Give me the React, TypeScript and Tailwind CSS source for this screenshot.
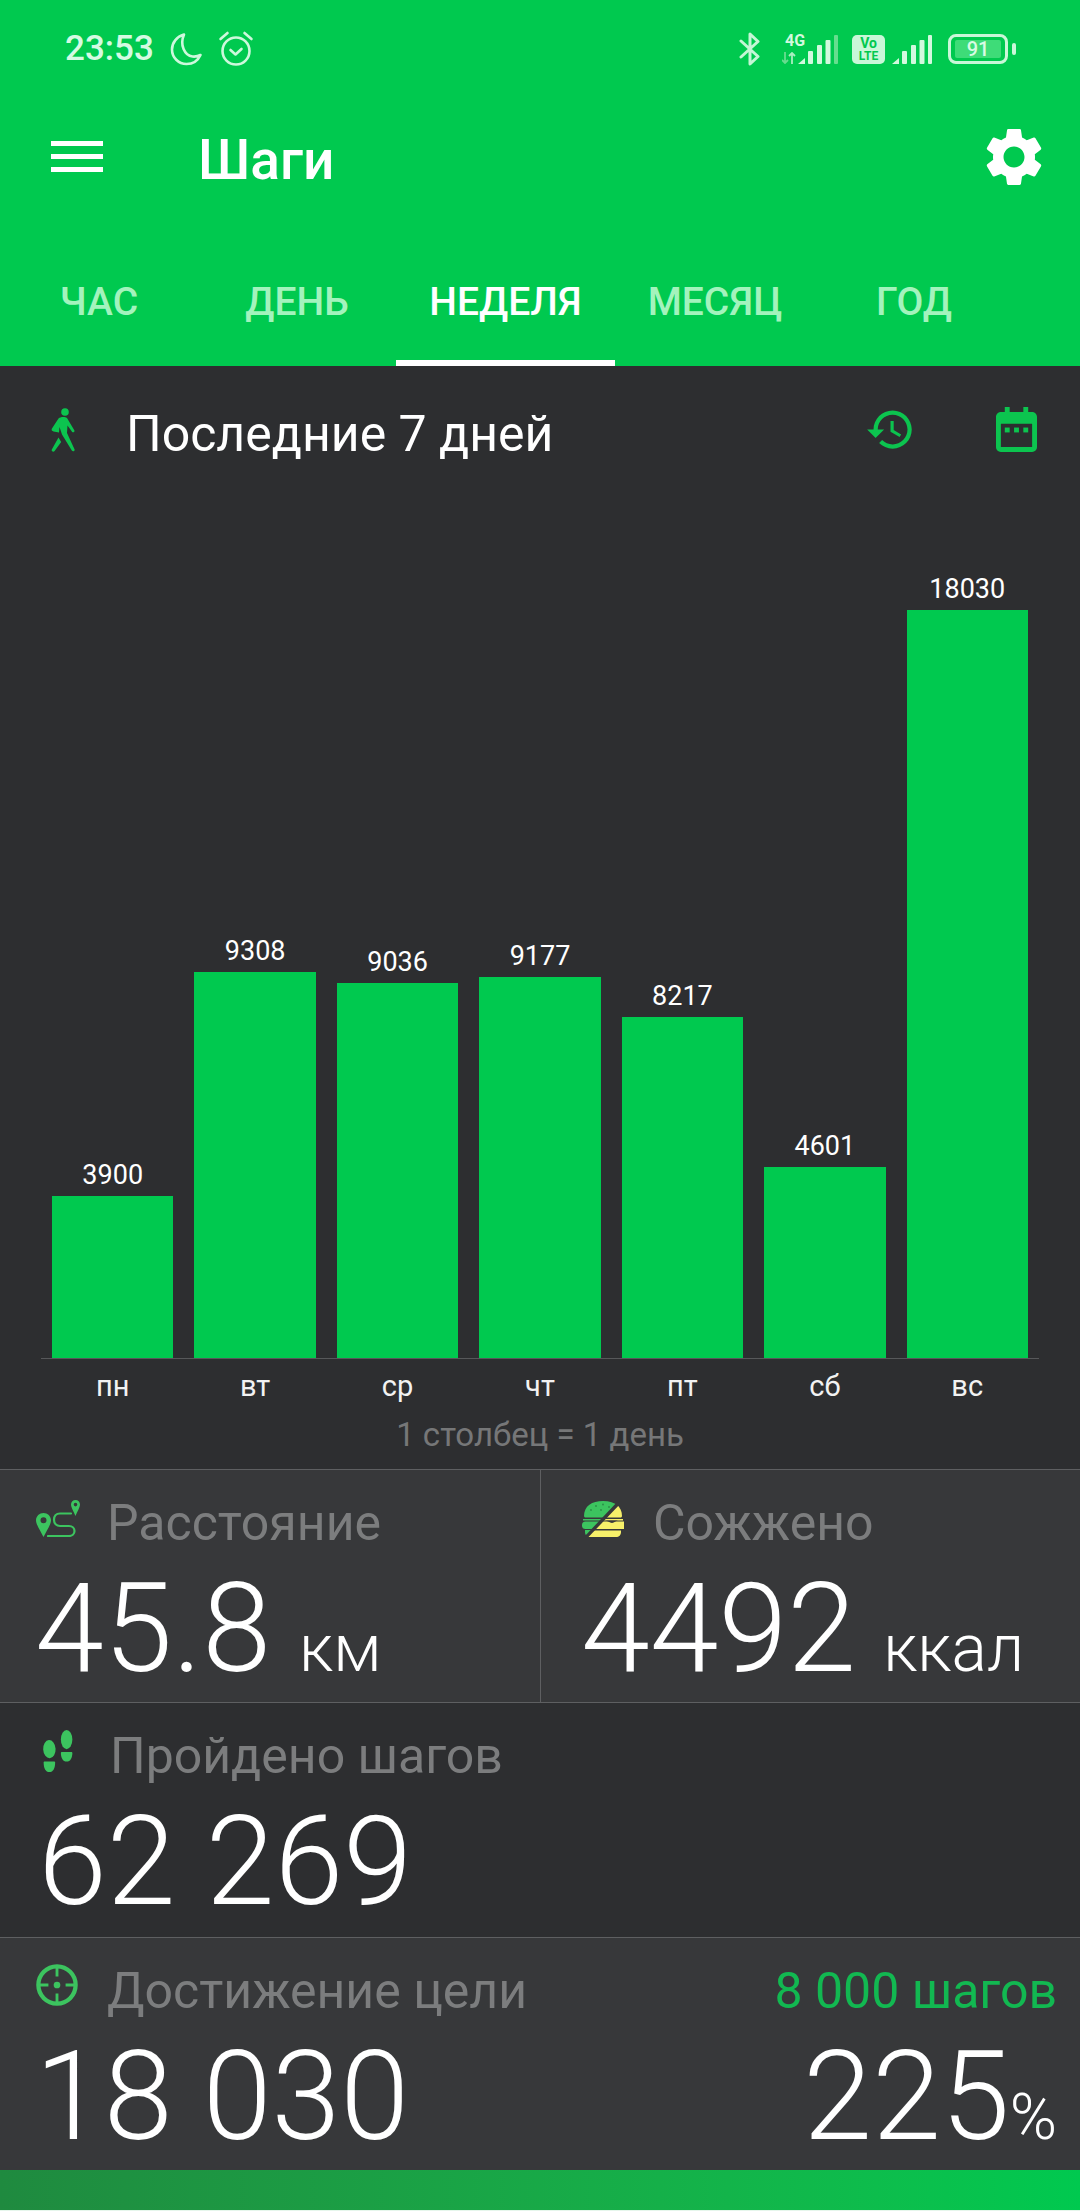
import React from "react";

const days = [
  { d: "пн", v: 3900 },
  { d: "вт", v: 9308 },
  { d: "ср", v: 9036 },
  { d: "чт", v: 9177 },
  { d: "пт", v: 8217 },
  { d: "сб", v: 4601 },
  { d: "вс", v: 18030 },
];

function Moon() {
  return (
    <svg width="36" height="36" viewBox="0 0 36 36" fill="none" stroke="#cdf8dc" strokeWidth="2.6" className="block">
      <path d="M15 3.500C8 5.500 3 11.500 3 18.500c0 8 6.500 14.500 14.500 14.500 6.500 0 11.500-3.500 14-9-2.500 1.300-5 1.800-8 1.500C15.500 24.500 10.500 14 15 3.500z" strokeLinejoin="round" />
    </svg>
  );
}
function Alarm() {
  return (
    <svg width="36" height="38" viewBox="0 0 36 38" fill="none" stroke="#cdf8dc" strokeWidth="2.6" strokeLinecap="round" strokeLinejoin="round" className="block">
      <circle cx="18" cy="21" r="13.500" />
      <path d="M12.500 20l5 4.500 6-5.500" />
      <path d="M2.500 9l7-6M33.500 9l-7-6" />
    </svg>
  );
}
function Bt() {
  return (
    <svg width="21" height="34" viewBox="0 0 21 34" fill="none" stroke="#c4f6d5" strokeWidth="3" strokeLinejoin="round" strokeLinecap="round" className="block">
      <path d="M2 9l17 15.500-8 7.500V2l8 7.500L2 25" />
    </svg>
  );
}
function Bars({ last }: { last: string }) {
  return (
    <svg width="40" height="29" viewBox="0 0 40 29" fill="#d2f9de" className="block">
      <path d="M0 29L7 23V29z" />
      <rect x="10" y="16" width="5" height="13" rx="1" />
      <rect x="19" y="10" width="5" height="19" rx="1" />
      <rect x="27.500" y="5" width="5" height="24" rx="1" />
      <rect x="36" y="0" width="4" height="29" rx="1" fill={last} />
    </svg>
  );
}

function StatusIcons() {
  return (
    <div className="flex items-center">
      <Bt />
      <div className="relative ml-[22px] h-[29px] w-[56px]">
        <span className="absolute left-[3px] top-[-2px] text-[16px] font-bold leading-[16px] text-[#d2f9de]">4G</span>
        <svg className="absolute left-0 bottom-0" width="14" height="12" viewBox="0 0 14 12" fill="none" strokeWidth="1.800">
          <path d="M3 0v11M0 8l3 3 3-3" stroke="#68dc8f" />
          <path d="M10 12V1M7 4l3-3 3 3" stroke="#a9eebf" />
        </svg>
        <div className="absolute bottom-0 right-0">
          <Bars last="#66de8e" />
        </div>
      </div>
      <div className="ml-[14px] flex h-[29px] w-[33px] flex-col items-center justify-center rounded-[5px] bg-[#c9f7d8] text-[14px] font-bold leading-[13px] text-[#00c94f]">
        <span>Vo</span>
        <span className="text-[12px] leading-[12px]">LTE</span>
      </div>
      <div className="ml-[7px]">
        <Bars last="#d2f9de" />
      </div>
      <div className="ml-[16px] flex h-[30px] w-[60px] items-center rounded-[8px] border-[3px] border-[#c9f7d8] px-[4px]">
        <div className="flex h-[18px] w-full items-center justify-center rounded-[2px] bg-[#3edc78] text-[20px] font-medium leading-none text-[#d9fbe4]">91</div>
      </div>
      <div className="ml-[4px] h-[12px] w-[4px] rounded-[2px] bg-[#c9f7d8]" />
    </div>
  );
}

function Walk() {
  return (
    <svg width="24" height="44" viewBox="0 0 24 44" fill="#0cc44f" className="block">
      <circle cx="14" cy="4" r="3.800" />
      <path d="M7.500 10.500C9.500 8.500 14 8.500 16 10l7.300 12.300c.8 1.500-1.300 2.800-2.300 1.400L16.500 17.500l-.5 7.500 7.500 16.300c.7 1.700-1.700 2.800-2.700 1.300L11 26.500 8.500 19 8 24.500 2.500 23.500C.8 23.100.300 22 .8 20.700z" />
      <path d="M7.500 29.500l2.700 4.500L3.600 43c-1.100 1.500-3.500.3-2.800-1.400z" />
    </svg>
  );
}
function History() {
  return (
    <svg width="51" height="51" viewBox="0 0 24 24" fill="#0cc44f" className="block">
      <path d="M13 3c-4.970 0-9 4.030-9 9H1l3.890 3.890.07.14L9 12H6c0-3.870 3.130-7 7-7s7 3.130 7 7-3.130 7-7 7c-1.930 0-3.680-.79-4.940-2.060l-1.420 1.420C8.270 19.990 10.510 21 13 21c4.970 0 9-4.030 9-9s-4.030-9-9-9zm-1 5v5l4.280 2.540.72-1.210-3.500-2.080V8H12z" />
    </svg>
  );
}
function Calendar() {
  return (
    <svg width="41" height="45" viewBox="0 0 42 46" className="block">
      <path fill="#0cc44f" fillRule="evenodd" d="M9 0h5v5h14V0h5v5h4c2.800 0 5 2.200 5 5v31c0 2.800-2.200 5-5 5H5c-2.800 0-5-2.200-5-5V10c0-2.800 2.200-5 5-5h4zM5 17v24h32V17z" />
      <rect x="9" y="21" width="5" height="5" fill="#0cc44f" />
      <rect x="18.500" y="21" width="5" height="5" fill="#0cc44f" />
      <rect x="28" y="21" width="5" height="5" fill="#0cc44f" />
    </svg>
  );
}
function Gear() {
  return (
    <svg width="70" height="70" viewBox="0 0 24 24" fill="#fff" className="block">
      <path d="M19.140 12.940c.04-.3.06-.61.06-.94 0-.32-.02-.64-.07-.94l2.030-1.580c.18-.14.23-.41.12-.61l-1.920-3.320c-.12-.22-.37-.29-.59-.22l-2.390.96c-.5-.38-1.030-.7-1.620-.94L14.400 2.810c-.04-.24-.24-.41-.48-.41h-3.840c-.24 0-.43.17-.47.41L9.250 5.350C8.660 5.590 8.120 5.920 7.630 6.290L5.240 5.330c-.22-.08-.47 0-.59.22L2.740 8.870c-.12.21-.08.47.12.61l2.030 1.580C4.840 11.360 4.800 11.690 4.800 12s.02.64.07.94l-2.030 1.580c-.18.14-.23.41-.12.61l1.920 3.320c.12.22.37.29.59.22l2.390-.96c.5.38 1.030.7 1.620.94l.36 2.540c.05.24.24.41.48.41h3.840c.24 0 .44-.17.47-.41l.36-2.540c.59-.24 1.130-.56 1.620-.94l2.390.96c.22.08.47 0 .59-.22l1.920-3.320c.12-.22.07-.47-.12-.61L19.140 12.940zM12 15.600c-1.980 0-3.600-1.620-3.600-3.600s1.620-3.600 3.600-3.600 3.600 1.620 3.600 3.600-1.620 3.600-3.600 3.600z" />
    </svg>
  );
}

const ICON = "#3cc45f";
function RouteIcon() {
  return (
    <svg width="44" height="37" viewBox="0 0 44 37" fill="none" className="block">
      <path fill={ICON} fillRule="evenodd" d="M7.500 13c4.100 0 7.500 3.200 7.500 7.200 0 4.200-4.200 10.300-7.500 16.800C4.200 30.500 0 24.400 0 20.200 0 16.200 3.400 13 7.500 13zm0 4.200a3 3 0 100 6 3 3 0 000-6z" />
      <path fill={ICON} fillRule="evenodd" d="M39.500 0C42 0 44 2 44 4.500c0 2.700-2.500 6.800-4.500 11.500-2-4.700-4.500-8.800-4.500-11.500C35 2 37 0 39.500 0zm0 2.800a1.800 1.800 0 100 3.600 1.800 1.800 0 000-3.600z" />
      <path stroke={ICON} strokeWidth="2.200" strokeLinecap="round" d="M35 13.500H24c-4 0-6 2.800-6 6.300s2.500 6.200 6 6.200h9c3.400 0 5.500 2.200 5.500 5s-2.100 5-5.500 5H12" />
    </svg>
  );
}
function BurgerIcon() {
  return (
    <svg width="42" height="36" viewBox="0 0 42 36" className="block">
      <defs>
        <clipPath id="bgA"><path d="M-1 -1H37L2 36H-1z" /></clipPath>
        <clipPath id="bgB"><path d="M42 0V36H6.500L41 0z" /></clipPath>
      </defs>
      <g clipPath="url(#bgA)" fill="#3cc45f">
        <path d="M2 15C2 5 10 0 21 0s19 5 19 15c0 .8-.7 1.500-1.500 1.500h-35C2.700 16.500 2 15.800 2 15z" />
        <rect x="1" y="18" width="40" height="1.500" />
        <rect x="0" y="20.500" width="42" height="7.500" rx="3.500" />
        <path d="M3 29h36v2c0 3-2 5-5 5H8c-3 0-5-2-5-5z" />
      </g>
      <g fill="#2a8c46">
        <circle cx="14" cy="5" r="0.900" /><circle cx="21" cy="3.500" r="0.900" /><circle cx="27" cy="6" r="0.900" /><circle cx="9" cy="9" r="0.900" /><circle cx="19" cy="9" r="0.900" />
      </g>
      <g clipPath="url(#bgB)" fill="#f7f06a">
        <path d="M2 15C2 5 10 0 21 0s19 5 19 15c0 .8-.7 1.500-1.500 1.500h-35C2.700 16.500 2 15.800 2 15z" />
        <rect x="1" y="18" width="40" height="1.500" />
        <path d="M4 20.500H42V28H4z" />
        <path d="M3 29.500h36V31c0 3-2 5-5 5H8c-3 0-5-2-5-5z" />
      </g>
      <path d="M23 19.500c3 0 4.500 2.500 7 2.500s3.500-2.500 6-2.500z" fill="#38393b" />
    </svg>
  );
}
function FeetIcon() {
  return (
    <svg width="32" height="44" viewBox="0 0 32 46" fill={ICON} className="block">
      <ellipse cx="7" cy="20" rx="6.500" ry="9.500" transform="rotate(-3 7 20)" />
      <path d="M2 33h10c.5 0 1 .5 1 1 0 6-2 10-6 10s-6-4-6-10c0-.5.5-1 1-1z" />
      <ellipse cx="25" cy="10" rx="6" ry="10" />
      <path d="M20 23h10c.5 0 1 .5 1 1 0 5-2 9-6 9s-6-4-6-9c0-.5.5-1 1-1z" />
    </svg>
  );
}
function TargetIcon() {
  return (
    <svg width="44" height="42" viewBox="0 0 44 44" fill="none" stroke={ICON} strokeWidth="4.500" className="block">
      <circle cx="22" cy="22" r="19.500" />
      <path d="M22 3v10M22 31v10M3 22h10M31 22h10" strokeWidth="3" />
      <circle cx="22" cy="22" r="3.500" fill={ICON} stroke="none" />
    </svg>
  );
}

const num = "font-light text-white";

export default function App() {
  return (
    <div className="flex h-[2211px] w-[1080px] flex-col overflow-hidden bg-[#2d2e30] font-['Roboto',sans-serif]">
      <header className="h-[366px] shrink-0 bg-[#00c94f]">
        <div className="flex h-[98px] items-center pl-[65px] pr-[64px]">
          <span className="text-[35px] font-medium text-[#d5fae2]">23:53</span>
          <span className="ml-[15px]"><Moon /></span>
          <span className="ml-[13px]"><Alarm /></span>
          <div className="flex-1" />
          <StatusIcons />
        </div>
        <div className="flex h-[124px] items-center pl-[51px] pr-[31px]">
          <div className="mb-[8px] flex w-[52px] flex-col gap-[8px]">
            <div className="h-[5px] bg-white" />
            <div className="h-[5px] bg-white" />
            <div className="h-[5px] bg-white" />
          </div>
          <h1 className="ml-[95px] text-[55px] font-medium text-white">Шаги</h1>
          <div className="flex-1" />
          <div className="mb-[6px]"><Gear /></div>
        </div>
        <div className="flex h-[144px]">
          {[
            { t: "ЧАС", w: "w-[198px]" },
            { t: "ДЕНЬ", w: "w-[198px]" },
            { t: "НЕДЕЛЯ", w: "w-[219px]", a: true },
            { t: "МЕСЯЦ", w: "w-[200px]" },
            { t: "ГОД", w: "w-[198px]" },
          ].map((x) => (
            <div
              key={x.t}
              className={`${x.w} flex items-center justify-center border-b-[6px] pt-[22px] text-[39px] font-medium ${x.a ? "border-white text-white" : "border-transparent text-[#a3f3bd]"}`}
            >
              {x.t}
            </div>
          ))}
        </div>
      </header>

      <section className="flex h-[137px] shrink-0 items-center pl-[51px] pr-[43px]">
        <div className="mb-[9px]"><Walk /></div>
        <span className="ml-[51px] text-[50px] text-white">Последние 7 дней</span>
        <div className="flex-1" />
        <div className="mb-[10px] flex items-center">
          <History />
          <span className="ml-[80px]"><Calendar /></span>
        </div>
      </section>

      <section className="mx-[41px] flex h-[856px] shrink-0 items-end gap-[21px] border-b border-[#57585a] px-[11px]">
        {days.map((x) => (
          <div key={x.d} className="flex w-[121.500px] flex-col items-center">
            <span className="mb-[4px] text-[27px] leading-[34px] text-white">{x.v}</span>
            <div className="w-full bg-[#00c94f]" style={{ height: x.v * 0.04149 }} />
          </div>
        ))}
      </section>

      <div className="mx-[41px] mt-[10px] flex gap-[21px] px-[11px]">
        {days.map((x) => (
          <span key={x.d} className="w-[121.500px] text-center text-[29px] leading-[34px] text-[#f2f2f2]">{x.d}</span>
        ))}
      </div>
      <div className="mt-[14px] h-[52px] shrink-0 text-center text-[33px] leading-[36px] text-[#767778]">1 столбец = 1 день</div>

      <section className="flex h-[233px] shrink-0 border-t border-[#5e5f61] bg-[#37383a]">
        <div className="w-[540px] pl-[35px]">
          <div className="flex h-[107px] items-center">
            <div className="mb-[10px] ml-[1px]"><RouteIcon /></div>
            <span className="ml-[27px] text-[50px] text-[#7c7d7e]">Расстояние</span>
          </div>
          <div className="flex items-baseline">
            <span className={`${num} text-[124px] leading-[104px]`}>45.8</span>
            <span className={`${num} ml-[28px] text-[66px] leading-[104px]`}>км</span>
          </div>
        </div>
        <div className="flex-1 border-l border-[#5e5f61] pl-[40px]">
          <div className="flex h-[107px] items-center">
            <div className="mb-[10px] ml-[1px]"><BurgerIcon /></div>
            <span className="ml-[29px] text-[50px] text-[#7c7d7e]">Сожжено</span>
          </div>
          <div className="flex items-baseline">
            <span className={`${num} text-[124px] leading-[104px]`}>4492</span>
            <span className={`${num} ml-[27px] text-[66px] leading-[104px]`}>ккал</span>
          </div>
        </div>
      </section>

      <section className="h-[235px] shrink-0 border-t border-[#5e5f61] pl-[42px]">
        <div className="flex h-[107px] items-center">
          <div className="mb-[10px]"><FeetIcon /></div>
          <span className="ml-[36px] text-[50px] text-[#7c7d7e]">Пройдено шагов</span>
        </div>
        <div className={`${num} -ml-[4px] text-[124px] leading-[104px]`}>62 269</div>
      </section>

      <section className="flex h-[233px] shrink-0 justify-between border-t border-[#5e5f61] bg-[#37383a] pl-[35px] pr-[23px]">
        <div>
          <div className="flex h-[107px] items-center">
            <div className="mb-[14px]"><TargetIcon /></div>
            <span className="ml-[28px] text-[50px] text-[#7c7d7e]">Достижение цели</span>
          </div>
          <div className={`${num} text-[124px] leading-[104px]`}>18 030</div>
        </div>
        <div className="flex flex-col items-end">
          <div className="flex h-[107px] items-center text-[50px] text-[#12b851]">8 000 шагов</div>
          <div className="flex items-baseline">
            <span className={`${num} text-[124px] leading-[104px]`}>225</span>
            <span className={`${num} text-[64px] leading-[104px]`}>%</span>
          </div>
        </div>
      </section>

      <div className="flex-1 bg-gradient-to-r from-[#1f8a3f] to-[#00c94f]" />
      <div className="h-px shrink-0 bg-[#e6f6ec]" />
    </div>
  );
}
